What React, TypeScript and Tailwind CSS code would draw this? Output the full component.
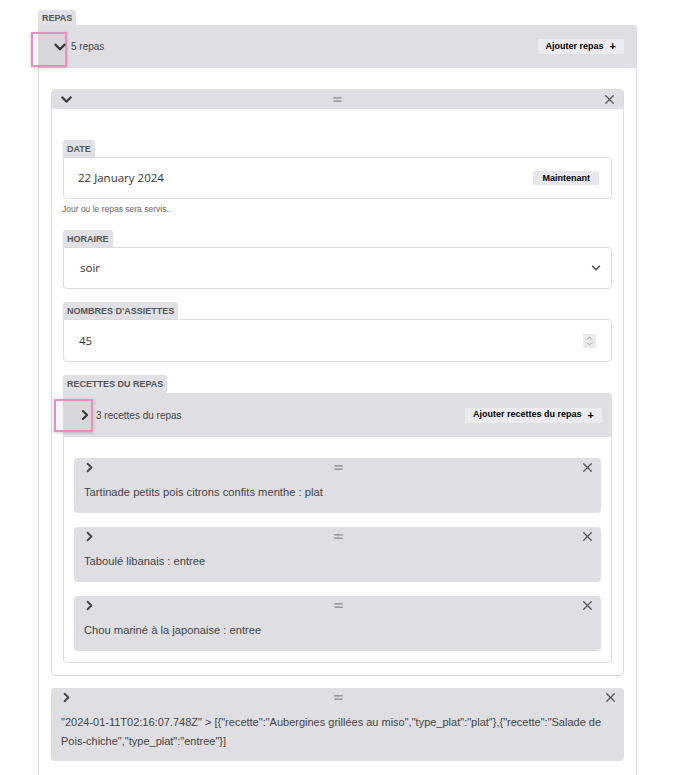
import React from 'react';
import { ChevronDown, ChevronRight, Equal, X } from 'lucide-react';

const recettes = [
  'Tartinade petits pois citrons confits menthe : plat',
  'Taboulé libanais : entree',
  'Chou mariné à la japonaise : entree',
];

const autresRepas = [
  '"2024-01-11T02:16:07.748Z" > [{"recette":"Aubergines grillées au miso","type_plat":"plat"},{"recette":"Salade de Pois-chiche","type_plat":"entree"}]',
  '"2024-01-12T02:16:07.748Z" > [{"recette":"Soupe miso","type_plat":"entree"}]',
];

function Tab({ children, tall }: { children: React.ReactNode; tall?: boolean }) {
  return (
    <div
      className={`w-fit rounded-t-[3px] bg-[#e1e1e5] px-[4px] text-[9px] font-bold text-[#555] ${
        tall ? 'h-[18px] leading-[19px]' : 'h-[17px] leading-[18px]'
      }`}
    >
      {children}
    </div>
  );
}

function AddButton({ label }: { label: string }) {
  return (
    <button className="flex h-[15px] items-center gap-[6px] bg-[#ececf0] px-[8px] text-[9px] font-bold text-black">
      {label}
      <span className="text-[11px] leading-none">+</span>
    </button>
  );
}

function ItemHeader({ open }: { open?: boolean }) {
  return (
    <div className="grid h-[19px] grid-cols-[1fr_auto_1fr] items-center">
      {open ? (
        <ChevronDown size={17} strokeWidth={3} className="text-[#444]" />
      ) : (
        <ChevronRight size={15} strokeWidth={3} className="text-[#444]" />
      )}
      <Equal size={13} strokeWidth={2} className="text-[#888]" />
      <X size={15} strokeWidth={2} className="justify-self-end text-[#555]" />
    </div>
  );
}

export default function App() {
  return (
    <div className="min-h-screen bg-white pl-[38px] pt-[10px] font-['Liberation_Sans',Arial,sans-serif]">
      <div className="w-[599px]">
        <div className="h-[15px] w-fit rounded-t-[3px] bg-[#e1e1e5] px-[4px] text-[9px] font-bold leading-[16px] text-[#555]">
          REPAS
        </div>

        {/* Repas header */}
        <div className="relative flex h-[43px] items-center justify-between rounded-tr-[4px] bg-[#dfdfe3] pr-[13px]">
          <div className="absolute left-[-7px] top-[7px] h-[35px] w-[36px] border-2 border-[#e88fbe] bg-black/[0.03] shadow-[0_1px_3px_rgba(0,0,0,0.2)]" />
          <div className="relative flex items-center pl-[13px]">
            <ChevronDown size={18} strokeWidth={3} className="text-[#333]" />
            <span className="ml-[2px] text-[10px] text-[#444]">5 repas</span>
          </div>
          <AddButton label="Ajouter repas" />
        </div>

        <div className="border-x border-[#dcdcdc] px-[12px] pt-[21px]">
          {/* Repas ouvert */}
          <div className="rounded-[4px] border border-[#dcdcdc]">
            <div className="rounded-t-[3px] bg-[#dfdfe3] px-[6px]">
              <ItemHeader open />
            </div>
            <div className="px-[11px] pb-[12px] pt-[31px]">
              <div className="mb-[15px]">
                <Tab>DATE</Tab>
                <div className="flex h-[42px] items-center justify-between rounded-[4px] rounded-tl-none border border-[#dcdcdc] pl-[14px] pr-[12px]">
                  <span className="font-['Open_Sans',sans-serif] text-[11.5px] text-[#333]">22 January 2024</span>
                  <button className="h-[14px] bg-[#e8e8ec] px-[9px] text-[9px] font-bold leading-[14px] text-black">
                    Maintenant
                  </button>
                </div>
                <p className="-ml-[1px] mt-[5px] text-[8.5px] leading-[11px] text-[#666]">Jour ou le repas sera servis..</p>
              </div>

              <div className="mb-[13px]">
                <Tab>HORAIRE</Tab>
                <div className="flex h-[42px] items-center justify-between rounded-[4px] rounded-tl-none border border-[#dcdcdc] pl-[16px] pr-[8px]">
                  <span className="font-['Open_Sans',sans-serif] text-[11.5px] text-[#333]">soir</span>
                  <ChevronDown size={14} strokeWidth={2.5} className="text-[#444]" />
                </div>
              </div>

              <div className="mb-[13px]">
                <Tab>NOMBRES D'ASSIETTES</Tab>
                <div className="flex h-[43px] items-center justify-between rounded-[4px] rounded-tl-none border border-[#dcdcdc] pl-[15px] pr-[15px]">
                  <span className="font-['Open_Sans',sans-serif] text-[11.5px] text-[#333]">45</span>
                  <div className="flex h-[14px] w-[13px] items-center justify-center bg-[#ebebed]">
                    <svg width="7" height="10" viewBox="0 0 7 10" fill="none" stroke="#999" strokeWidth="1">
                      <path d="M1 3.5L3.5 1L6 3.5" />
                      <path d="M1 6.5L3.5 9L6 6.5" />
                    </svg>
                  </div>
                </div>
              </div>

              <Tab tall>RECETTES DU REPAS</Tab>
              <div className="relative flex h-[44px] items-center justify-between rounded-tr-[4px] bg-[#dfdfe3] pr-[10px]">
                <div className="absolute left-[-9px] top-[6px] h-[33px] w-[39px] border-2 border-[#e88fbe] bg-black/[0.03] shadow-[0_1px_3px_rgba(0,0,0,0.2)]" />
                <div className="relative flex items-center pl-[14px]">
                  <ChevronRight size={16} strokeWidth={3} className="text-[#333]" />
                  <span className="ml-[3px] text-[10px] text-[#444]">3 recettes du repas</span>
                </div>
                <AddButton label="Ajouter recettes du repas" />
              </div>
              <div className="flex flex-col gap-[14px] rounded-b-[4px] border-x border-b border-[#dcdcdc] px-[10px] pb-[11px] pt-[21px]">
                {recettes.map((r) => (
                  <div key={r} className="rounded-[4px] bg-[#dfdfe3] pl-[8px] pr-[6px] pb-[11px]">
                    <ItemHeader />
                    <p className="mt-[6px] pl-[2px] text-[11.2px] leading-[19px] text-[#444]">{r}</p>
                  </div>
                ))}
              </div>
            </div>
          </div>

          {/* Repas fermés */}
          <div className="mt-[12px] flex flex-col gap-[14px]">
            {autresRepas.map((r, i) => (
              <div
                key={r}
                className={`rounded-[4px] bg-[#dfdfe3] pb-[10px] pl-[8px] pr-[6px] ${i === 1 ? 'border-t border-[#d2d2d6]' : ''}`}
              >
                <ItemHeader />
                <p className="mt-[6px] pl-[2px] pr-[4px] text-[11px] leading-[19px] text-[#444]">{r}</p>
              </div>
            ))}
          </div>
        </div>
      </div>
    </div>
  );
}
